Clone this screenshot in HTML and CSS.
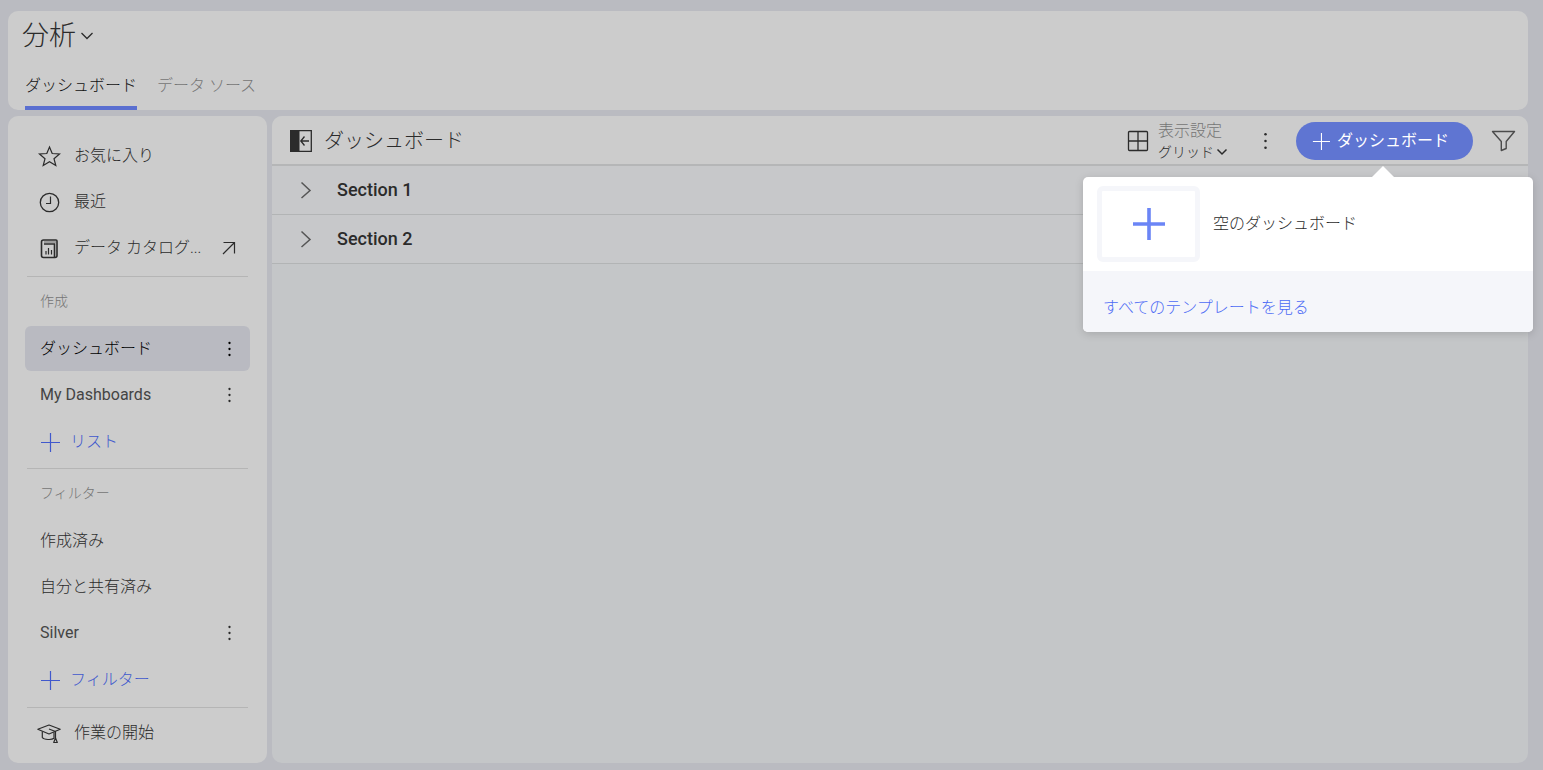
FILE: index.html
```html
<!DOCTYPE html>
<html lang="ja">
<head>
<meta charset="utf-8">
<meta name="viewport" content="width=device-width, initial-scale=1">
<title>分析</title>
<link rel="stylesheet" href="styles.css">
</head>
<body>
<svg class="defs" aria-hidden="true">
  <symbol id="plus" viewBox="0 0 20 20"><path d="M10.5 1v19M1 10.5h19" fill="none" stroke="currentColor" stroke-width="1.2"/></symbol>
  <symbol id="dots" viewBox="0 0 4 18"><g fill="currentColor"><circle cx="2" cy="3" r="1.15"/><circle cx="2" cy="9" r="1.15"/><circle cx="2" cy="15" r="1.15"/></g></symbol>
  <symbol id="chevron" viewBox="0 0 12 20"><path d="M1.5 2.5 10 10.500 1.5 18" fill="none" stroke="currentColor" stroke-width="1.5"/></symbol>
  <symbol id="caret" viewBox="0 0 14 10"><path d="M1.500 2 7 7.500 12.500 2" fill="none" stroke="currentColor" stroke-width="1.3"/></symbol>
</svg>
<div class="app">
  <header class="panel header">
    <button class="app-title" type="button">分析 <svg class="title-caret"><use href="#caret"/></svg></button>
    <nav class="tabs">
      <a class="tab tab-active" href="#">ダッシュボード</a>
      <a class="tab" href="#">データ ソース</a>
    </nav>
  </header>
  <div class="columns">
    <aside class="panel sidebar">
      <ul class="list list-top">
        <li class="row"><a class="link" href="#"><svg class="icon" viewBox="0 0 24 24"><path d="m12.500 3 2.700 6.500 7.300.5-5.500 4.700 1.800 6.800-6.300-3.700-6.300 3.700L8 14.700 2.500 10l7.300-.5z" fill="none" stroke="currentColor" stroke-width="1.2"/></svg>お気に入り</a></li>
        <li class="row"><a class="link" href="#"><svg class="icon" viewBox="0 0 24 24"><circle cx="12.500" cy="12.500" r="9.200" fill="none" stroke="currentColor" stroke-width="1.300"/><path d="M13.500 6.500v7H9" fill="none" stroke="currentColor" stroke-width="1.200"/></svg>最近</a></li>
        <li class="row"><a class="link" href="#"><svg class="icon" viewBox="0 0 24 24"><path d="M6.500 4H19a1 1 0 0 1 1 1v14.500a2 2 0 0 1-2 2H6.500a2 2 0 0 1-2-2V6a2 2 0 0 1 2-2z" fill="none" stroke="currentColor" stroke-width="1.600"/><path d="M7 8h10.500v13" fill="none" stroke="currentColor" stroke-width="1.600"/><path d="M7 6h12" stroke="currentColor" stroke-width=".6"/><path d="M9 15v3.500M11.500 12v6.500M14.500 14v4.500" stroke="currentColor" stroke-width="1.200"/></svg>データ カタログ...</a><svg class="arrow" viewBox="0 0 14 14"><path d="M1.500 1.500h11v11M12.500 1.500l-11.500 11.500" fill="none" stroke="currentColor" stroke-width="1.200"/></svg></li>
      </ul>
      <h2 class="group">作成</h2>
      <ul class="list">
        <li class="row row-selected"><a class="link" href="#">ダッシュボード</a><button class="more" type="button" aria-label="メニュー"><svg class="dots"><use href="#dots"/></svg></button></li>
        <li class="row"><a class="link latin" href="#">My Dashboards</a><button class="more" type="button" aria-label="メニュー"><svg class="dots"><use href="#dots"/></svg></button></li>
        <li class="row row-add"><button class="add" type="button"><svg class="plus"><use href="#plus"/></svg>リスト</button></li>
      </ul>
      <h2 class="group">フィルター</h2>
      <ul class="list">
        <li class="row"><a class="link" href="#">作成済み</a></li>
        <li class="row"><a class="link" href="#">自分と共有済み</a></li>
        <li class="row"><a class="link latin" href="#">Silver</a><button class="more" type="button" aria-label="メニュー"><svg class="dots"><use href="#dots"/></svg></button></li>
        <li class="row row-add"><button class="add" type="button"><svg class="plus"><use href="#plus"/></svg>フィルター</button></li>
      </ul>
      <ul class="list list-bottom">
        <li class="row"><a class="link" href="#"><svg class="icon" viewBox="0 0 24 24"><g fill="none" stroke="currentColor" stroke-width="1.200" stroke-linejoin="round"><path d="M.8 8.300 12 4l11.200 4.300L12 13z"/><path d="M12 8l6.500 2.500v7"/><path d="M5.300 10.500v6c1.700 2.400 9.500 2.600 11.700.8v-6"/><path d="M18.500 17l-1.800 4.500h3.600z"/></g></svg>作業の開始</a></li>
      </ul>
    </aside>
    <main class="panel main">
      <div class="toolbar">
        <button class="collapse" type="button" aria-label="サイドバーを閉じる"><svg class="collapse-icon" viewBox="0 0 22 22"><path d="M.7.700h20.600v20.600H.7z" fill="none" stroke="currentColor" stroke-width="1.300"/><path d="M0 0h9.500v22H0z" fill="currentColor"/><path d="M19 11h-8M14.500 6.500 10.800 11l3.700 4.500" fill="none" stroke="currentColor" stroke-width="1.300"/></svg></button>
        <h1 class="heading">ダッシュボード</h1>
        <button class="view" type="button">
          <svg class="grid-icon" viewBox="0 0 22 22"><path d="M2.500 1.500h17a1 1 0 0 1 1 1v17a1 1 0 0 1-1 1h-17a1 1 0 0 1-1-1v-17a1 1 0 0 1 1-1zM11 1.500v19M1.500 11h19" fill="none" stroke="currentColor" stroke-width="1.300"/></svg>
          <span class="view-text"><span class="view-label">表示設定</span><span class="view-value">グリッド<svg class="view-caret" viewBox="0 0 12 8"><path d="M1.500 1.500 6 6l4.500-4.500" fill="none" stroke="currentColor" stroke-width="1.500"/></svg></span></span>
        </button>
        <button class="more toolbar-more" type="button" aria-label="メニュー"><svg class="dots-large"><use href="#dots"/></svg></button>
        <div class="create-wrap">
          <button class="create" type="button"><svg class="create-plus"><use href="#plus"/></svg>ダッシュボード</button>
        </div>
        <button class="filter" type="button" aria-label="フィルター"><svg class="filter-icon" viewBox="0 0 24 22"><path d="M1 1.500h22l-8.300 10v7l-4.900 2v-9z" fill="none" stroke="currentColor" stroke-width="1.400" stroke-linejoin="round"/></svg></button>
        <div class="popup" role="menu">
          <button class="template" type="button" role="menuitem">
            <span class="thumb"><svg class="thumb-plus" viewBox="0 0 32 32"><path d="M16 0v32M0 16h32" stroke="currentColor" stroke-width="3.600"/></svg></span>
            空のダッシュボード
          </button>
          <div class="popup-footer"><a class="all-templates" href="#" role="menuitem">すべてのテンプレートを見る</a></div>
        </div>
      </div>
      <button class="section" type="button"><svg class="chevron"><use href="#chevron"/></svg>Section 1</button>
      <button class="section" type="button"><svg class="chevron"><use href="#chevron"/></svg>Section 2</button>
    </main>
  </div>
</div>
</body>
</html>
```

FILE: styles.css
```css
* { box-sizing: border-box; }

body {
  margin: 0;
  background: #babbc1;
  color: #2b2b2b;
  font: 300 16px/24px Roboto, "Noto Sans CJK JP", sans-serif;
}

button {
  margin: 0;
  padding: 0;
  border: 0;
  background: none;
  color: inherit;
  font: inherit;
  text-align: left;
  cursor: pointer;
}

a { color: inherit; text-decoration: none; }
svg { display: block; flex: none; }
.defs { position: absolute; width: 0; height: 0; }

.app {
  display: flex;
  flex-direction: column;
  gap: 6px;
  min-height: 100vh;
  padding: 11px 15px 7px 8px;
}

.panel { border-radius: 10px; background: #ccc; }

.header {
  display: flex;
  flex-direction: column;
  justify-content: space-between;
  height: 99px;
  padding: 7px 17px 0;
}

.app-title {
  display: flex;
  align-items: center;
  align-self: flex-start;
  gap: 4px;
  margin-left: -3px;
  font-size: 27px;
  line-height: 36px;
}
.title-caret { width: 14px; height: 10px; }

.tabs { display: flex; gap: 20px; }
.tab { height: 36px; color: #757575; }
.tab-active { border-bottom: 4px solid #5a6fd0; color: #111; }

.columns { display: flex; flex: 1; gap: 5px; }

.sidebar { flex: none; width: 259px; padding: 17px 17px 0; }

.list {
  display: flex;
  flex-direction: column;
  gap: 1px;
  margin: 0;
  padding: 0;
  list-style: none;
}
.list-top { padding-bottom: 3px; }
.list-bottom { padding-top: 2px; }

.row {
  display: flex;
  align-items: center;
  justify-content: space-between;
  height: 45px;
  padding: 0 16px 0 15px;
  border-radius: 6px;
}
.row-selected { background: #b9bac1; color: #000; }
.row-add { height: 47px; }

.link { display: flex; align-items: center; gap: 13px; white-space: nowrap; }
.latin { color: #444; font-size: 16px; font-weight: 400; }
.icon { width: 24px; height: 24px; margin-left: -3px; }
.arrow { width: 14px; height: 14px; margin-right: -2px; }
.more { padding: 0 2px; }
.dots { width: 5px; height: 18px; }

.add { display: flex; align-items: center; gap: 10px; color: #4058cc; }
.plus { width: 20px; height: 20px; }

.group {
  margin: 3px 2px 0;
  padding: 12px 13px;
  border-top: 1px solid #b5b5b5;
  color: #757575;
  font-size: 14px;
  font-weight: 300;
  line-height: 25px;
}
.list-bottom { margin: 4px 0 0; }
.list-bottom::before {
  height: 1px;
  margin: -2px 2px 1px;
  background: #b5b5b5;
  content: "";
}

.main { flex: 1; min-width: 0; background: #c4c6c8; }

.toolbar {
  position: relative;
  display: flex;
  align-items: center;
  height: 50px;
  padding: 2px 12px 0 18px;
  border-bottom: 2px solid #b5b6b7;
  border-radius: 10px 10px 0 0;
  background: #ccc;
}
.collapse-icon { width: 22px; height: 22px; }
.heading {
  flex: 1;
  margin: 0 0 0 12px;
  font-size: 20px;
  font-weight: 300;
  line-height: 30px;
}

.view { display: flex; align-items: center; gap: 9px; }
.grid-icon { width: 22px; height: 22px; }
.view-text { display: flex; flex-direction: column; }
.view-label { color: #757575; line-height: 22px; }
.view-value { display: flex; align-items: center; font-size: 14px; line-height: 20px; }
.view-caret { width: 12px; height: 8px; margin-left: 2px; }

.toolbar-more { margin: 0 26px 0 33px; }
.dots-large { width: 5px; height: 20px; }

.create {
  display: flex;
  align-items: center;
  gap: 7px;
  height: 38px;
  padding: 0 24px 0 16px;
  border-radius: 19px;
  background: #5f75d2;
  color: #fff;
  font-weight: 400;
}
.create-plus { width: 18px; height: 18px; }
.filter { margin-left: 18px; color: #4c4c4c; }
.filter-icon { width: 25px; height: 22px; }

.popup {
  position: absolute;
  z-index: 1;
  top: 61px;
  right: -5px;
  width: 450px;
  border-radius: 5px;
  background: #fff;
  box-shadow: 0 2px 8px rgba(0, 0, 0, 0.15);
}
.popup::before {
  position: absolute;
  top: -11px;
  right: 139px;
  border: 11px solid transparent;
  border-top-width: 0;
  border-bottom-color: #fff;
  content: "";
}

.template {
  display: flex;
  align-items: center;
  gap: 13px;
  width: 100%;
  height: 94px;
  padding: 0 14px;
}
.thumb {
  display: flex;
  align-items: center;
  justify-content: center;
  width: 103px;
  height: 76px;
  border: 5px solid #f5f6fa;
  border-radius: 6px;
  color: #6b85f6;
}
.thumb-plus { width: 32px; height: 32px; }

.popup-footer {
  padding: 25px 20px 12px;
  border-radius: 0 0 5px 5px;
  background: #f5f6fa;
}
.all-templates { color: #4d6bf5; }

.section {
  display: flex;
  align-items: center;
  gap: 25px;
  width: 100%;
  height: 49px;
  padding: 0 28px;
  border-bottom: 1px solid #b2b4b5;
  background: #c7c8ca;
  font-size: 18px;
  font-weight: 500;
}
.chevron { width: 12px; height: 20px; color: #555; }
```
